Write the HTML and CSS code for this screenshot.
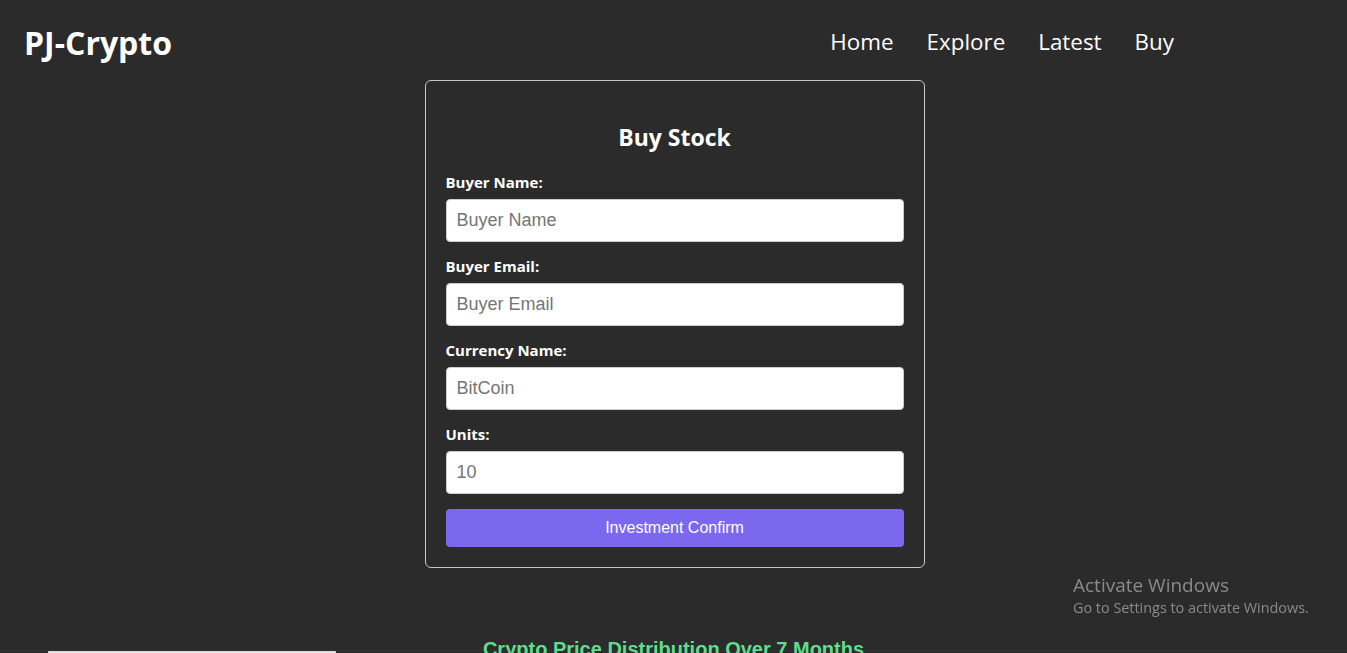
FILE: index.html
```html
<!DOCTYPE html>
<html lang="en">
<head>
<meta charset="utf-8">
<title>PJ-Crypto</title>
<link rel="stylesheet" href="styles.css">
</head>
<body>
<header class="topbar">
  <div class="logo">PJ-Crypto</div>
  <nav class="nav">
    <a href="#" class="nav-link">Home</a>
    <a href="#" class="nav-link">Explore</a>
    <a href="#" class="nav-link">Latest</a>
    <a href="#" class="nav-link">Buy</a>
  </nav>
</header>

<main class="form-wrap">
  <form class="card">
    <h2 class="card-title">Buy Stock</h2>
    <div class="field">
      <label class="field-label">Buyer Name:</label>
      <input class="field-input" type="text" placeholder="Buyer Name">
    </div>
    <div class="field">
      <label class="field-label">Buyer Email:</label>
      <input class="field-input" type="email" placeholder="Buyer Email">
    </div>
    <div class="field">
      <label class="field-label">Currency Name:</label>
      <input class="field-input" type="text" placeholder="BitCoin">
    </div>
    <div class="field">
      <label class="field-label">Units:</label>
      <input class="field-input" type="text" placeholder="10">
    </div>
    <button class="confirm-btn" type="button">Investment Confirm</button>
  </form>
</main>

<section class="charts">
  <h3 class="charts-title">Crypto Price Distribution Over 7 Months</h3>
  <div class="chart-row">
    <div class="chart-box"></div>
  </div>
</section>

<div class="watermark">
  <div class="wm-title">Activate Windows</div>
  <div class="wm-sub">Go to Settings to activate Windows.</div>
</div>
</body>
</html>
```

FILE: styles.css
```css
html, body {
  margin: 0;
  padding: 0;
}

body {
  background: #2b2b2b;
  color: #ffffff;
  font-family: "Open Sans", "Noto Sans", sans-serif;
  overflow: hidden;
}

.topbar {
  display: flex;
  justify-content: space-between;
  align-items: center;
  height: 80px;
  padding: 0 173px 0 24px;
}

.logo {
  font-size: 32px;
  font-weight: 700;
  line-height: 1;
  margin-top: 5px;
}

.nav {
  display: flex;
  gap: 33px;
  margin-top: 2px;
}

.nav-link {
  color: #ffffff;
  text-decoration: none;
  font-size: 22.4px;
}

.form-wrap {
  display: flex;
  justify-content: center;
  padding-left: 2px;
}

.card {
  width: 500px;
  box-sizing: border-box;
  border: 1px solid #c9c9c9;
  border-radius: 6px;
  padding: 20px;
  display: flex;
  flex-direction: column;
}

.card-title {
  margin: 20px 0 19px;
  font-size: 23px;
  line-height: 33px;
  font-weight: 700;
  text-align: center;
}

.field {
  display: flex;
  flex-direction: column;
  margin-bottom: 15px;
}

.field-label {
  font-size: 15px;
  font-weight: 700;
  line-height: 19px;
  margin-bottom: 7px;
}

.field-input {
  height: 43px;
  box-sizing: border-box;
  border: 1px solid #cccccc;
  border-radius: 4px;
  background: #ffffff;
  padding: 0 10px;
  font-family: "Liberation Sans", Arial, sans-serif;
  font-size: 18px;
  color: #222;
  outline: none;
}

.field-input::placeholder {
  color: #757575;
}

.confirm-btn {
  height: 38px;
  border: none;
  border-radius: 4px;
  background: #7b68ee;
  color: #ffffff;
  font-family: "Liberation Sans", Arial, sans-serif;
  font-size: 16px;
  padding: 0;
}

.charts {
  margin-top: 71px;
}

.charts-title {
  margin: 0;
  height: 11px;
  line-height: 20px;
  font-family: "Liberation Sans", Arial, sans-serif;
  font-size: 20px;
  font-weight: 700;
  color: #5fdc8c;
  text-align: center;
}

.chart-row {
  display: flex;
  padding-left: 48px;
  border-top: 1px solid #2f3539;
}

.chart-box {
  width: 288px;
  height: 200px;
  background: #f2f2f2;
  border: 1px solid #d0d0d0;
  box-sizing: border-box;
}

.watermark {
  position: fixed;
  left: 1073px;
  top: 572px;
  color: #8a8a8a;
  font-family: "Open Sans", "Noto Sans", sans-serif;
}

.wm-title {
  font-size: 19px;
  line-height: 26px;
}

.wm-sub {
  font-size: 14.4px;
  line-height: 20px;
}
```
